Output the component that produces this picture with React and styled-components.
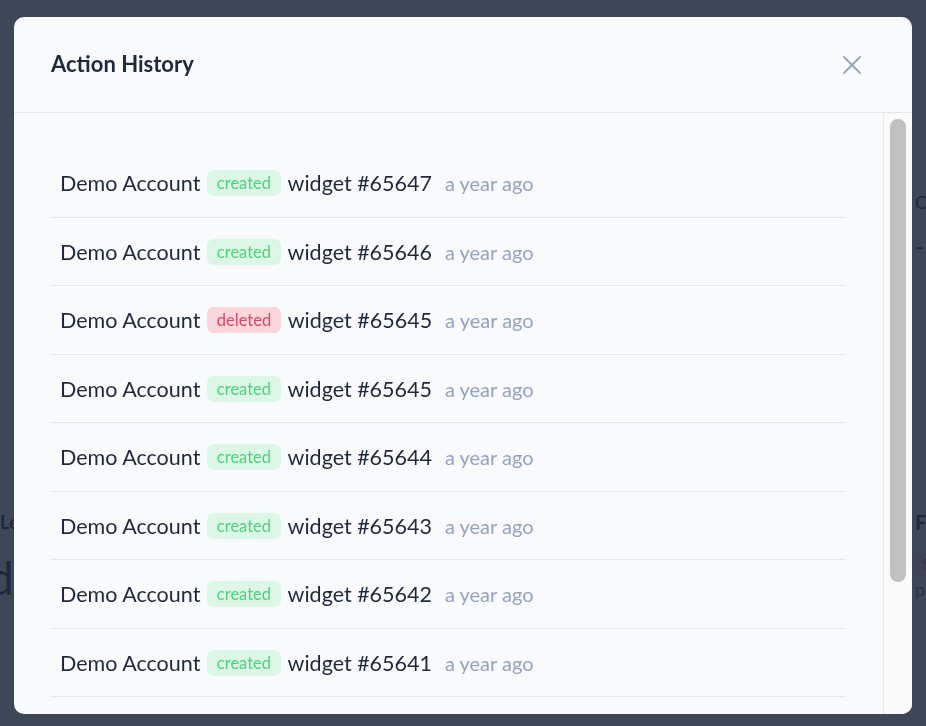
import React from 'react'
import styled, { createGlobalStyle } from 'styled-components'

const GlobalStyle = createGlobalStyle`
	html, body {
		margin: 0;
		padding: 0;
		height: 100%;
		overflow: hidden;
		background: #ffffff;
		font-family: Lato, "Noto Sans", sans-serif;
		color: #1e293b;
	}
`

// dashboard behind the modal, only its edges show
const Page = styled.div`
	display: grid;
	grid-template-columns: 450px 451px 220px;
	column-gap: 7px;
	padding-top: 190px;
	width: 1200px;
`

const Stat = styled.div`
	display: flex;
	flex-direction: column;
	height: 320px;
`

const StatLabel = styled.div`
	font-size: ${p => p.size || 18}px;
	font-weight: ${p => (p.bold ? 700 : 400)};
	line-height: 24px;
`

const StatValue = styled.div`
	margin-top: ${p => p.mt || 0}px;
	font-size: ${p => p.size || 24}px;
	font-weight: 400;
	line-height: ${p => p.lh || 40}px;
	text-indent: ${p => p.indent || 0}px;
	color: ${p => p.color || '#1e293b'};
`

const Trend = styled.span`
	align-self: flex-start;
	margin-top: 18px;
	padding: 2px 8px;
	border-radius: 6px;
	background: #fde2e2;
	color: #dc2626;
	font-size: 15px;
	line-height: 21px;
`

const Overlay = styled.div`
	position: fixed;
	inset: 0;
	background: rgba(30, 41, 59, 0.86);
	display: flex;
	justify-content: center;
	align-items: flex-start;
	padding-top: 17px;
`

const Modal = styled.div`
	width: 898px;
	height: 697px;
	background: #f8fafc;
	border-radius: 10px;
	display: flex;
	flex-direction: column;
	overflow: hidden;
`

const Header = styled.div`
	height: 96px;
	flex: none;
	display: flex;
	align-items: center;
	justify-content: space-between;
	padding: 0 51px 0 37px;
	border-bottom: 1px solid #e2e8f0;
	box-sizing: border-box;
`

const Title = styled.h2`
	margin: 0 0 2px;
	font-size: 22px;
	font-weight: 700;
	color: #1e293b;
`

const CloseButton = styled.button`
	border: 0;
	background: none;
	padding: 0;
	width: 18px;
	height: 18px;
	display: flex;
	cursor: pointer;
`

const Body = styled.div`
	flex: 1;
	min-height: 0;
	display: flex;
`

const ScrollArea = styled.div`
	flex: 1;
	overflow: hidden;
	padding: 36px 37px 36px 36px;
`

const Track = styled.div`
	flex: none;
	width: 16px;
	padding: 6px 6px 0 6px;
	background: #fafafa;
	border-left: 1px solid #e8e8e8;
`

const Thumb = styled.div`
	width: 16px;
	height: 463px;
	border-radius: 8px;
	background: #c1c1c1;
`

const List = styled.ul`
	list-style: none;
	margin: 0;
	padding: 0;
`

const Row = styled.li`
	display: flex;
	align-items: center;
	gap: 7px;
	padding: 20px 10px 19.5px;
	line-height: 28px;
	border-bottom: 1px solid #e2e8f0;
	font-size: 21.5px;
	color: #1e293b;
	white-space: nowrap;
`

const Badge = styled.span`
	display: inline-block;
	padding: 0 9.5px;
	border-radius: 7px;
	font-size: 16.5px;
	line-height: 26px;
	background: ${p => (p.kind === 'deleted' ? '#fad7dc' : '#dcf7e5')};
	color: ${p => (p.kind === 'deleted' ? '#e0475f' : '#4ed27c')};
`

const Time = styled.span`
	margin-left: 6px;
	font-size: 20px;
	color: #94a3c0;
`

const history = [
	{ id: 65647, action: 'created' },
	{ id: 65646, action: 'created' },
	{ id: 65645, action: 'deleted' },
	{ id: 65645, action: 'created' },
	{ id: 65644, action: 'created' },
	{ id: 65643, action: 'created' },
	{ id: 65642, action: 'created' },
	{ id: 65641, action: 'created' },
	{ id: 65640, action: 'created' },
	{ id: 65639, action: 'created' }
]

export default function App() {
	return (
		<>
			<GlobalStyle />
			<Page>
				<Stat />
				<Stat />
				<Stat>
					<StatLabel>Conversions</StatLabel>
					<StatValue mt={12}>-</StatValue>
				</Stat>
				<Stat>
					<StatLabel bold>Leads</StatLabel>
					<StatValue size={46} lh={56} mt={16} indent={-12}>daily</StatValue>
				</Stat>
				<Stat />
				<Stat>
					<StatLabel bold size={20}>Funnel</StatLabel>
					<Trend>%</Trend>
					<StatValue size={18} lh={24} color="#64748b">per week</StatValue>
				</Stat>
			</Page>
			<Overlay>
				<Modal>
					<Header>
						<Title>Action History</Title>
						<CloseButton aria-label="Close">
							<svg width="18" height="18" viewBox="0 0 18 18" fill="none">
								<path d="M1 1l16 16M17 1L1 17" stroke="#94a3b8" strokeWidth="1.8" strokeLinecap="round" />
							</svg>
						</CloseButton>
					</Header>
					<Body>
						<ScrollArea>
							<List>
								{history.map((item, i) => (
									<Row key={i}>
										<span>Demo Account</span>
										<Badge kind={item.action}>{item.action}</Badge>
										<span>widget #{item.id}</span>
										<Time>a year ago</Time>
									</Row>
								))}
							</List>
						</ScrollArea>
						<Track>
							<Thumb />
						</Track>
					</Body>
				</Modal>
			</Overlay>
		</>
	)
}
